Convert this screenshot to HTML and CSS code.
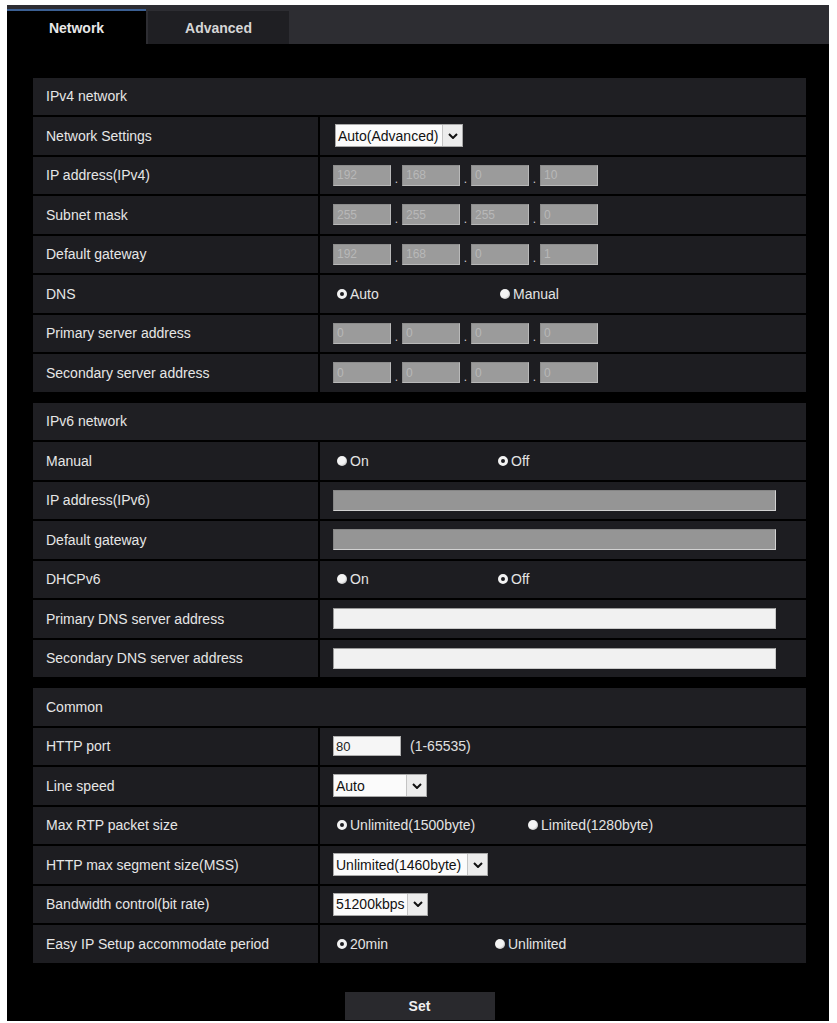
FILE: index.html
```html
<!DOCTYPE html>
<html lang="en">
<head>
<meta charset="utf-8">
<title>Network</title>
<link rel="stylesheet" href="styles.css">
</head>
<body>
<div class="panel">
  <div class="tabbar">
    <div class="tab tab-active">Network</div>
    <div class="tab tab-idle">Advanced</div>
  </div>

  <div class="content">
    <section class="section">
      <div class="sec-head">IPv4 network</div>
      <div class="row">
        <div class="label">Network Settings</div>
        <div class="value">
          <span class="select sel-netset"><span class="sel-text">Auto(Advanced)</span><span class="sel-arrow"><svg viewBox="0 0 10 6" width="10" height="6"><polyline points="1,1 5,5 9,1" fill="none" stroke="#111" stroke-width="2"/></svg></span></span>
        </div>
      </div>
      <div class="row">
        <div class="label">IP address(IPv4)</div>
        <div class="value ipset">
          <input class="ip" value="192" disabled><span class="dot">.</span><input class="ip" value="168" disabled><span class="dot">.</span><input class="ip" value="0" disabled><span class="dot">.</span><input class="ip" value="10" disabled>
        </div>
      </div>
      <div class="row">
        <div class="label">Subnet mask</div>
        <div class="value ipset">
          <input class="ip" value="255" disabled><span class="dot">.</span><input class="ip" value="255" disabled><span class="dot">.</span><input class="ip" value="255" disabled><span class="dot">.</span><input class="ip" value="0" disabled>
        </div>
      </div>
      <div class="row">
        <div class="label">Default gateway</div>
        <div class="value ipset">
          <input class="ip" value="192" disabled><span class="dot">.</span><input class="ip" value="168" disabled><span class="dot">.</span><input class="ip" value="0" disabled><span class="dot">.</span><input class="ip" value="1" disabled>
        </div>
      </div>
      <div class="row">
        <div class="label">DNS</div>
        <div class="value radios">
          <label class="opt opt-dns"><span class="radio radio-on"></span>Auto</label>
          <label class="opt"><span class="radio radio-off"></span>Manual</label>
        </div>
      </div>
      <div class="row">
        <div class="label">Primary server address</div>
        <div class="value ipset">
          <input class="ip" value="0" disabled><span class="dot">.</span><input class="ip" value="0" disabled><span class="dot">.</span><input class="ip" value="0" disabled><span class="dot">.</span><input class="ip" value="0" disabled>
        </div>
      </div>
      <div class="row">
        <div class="label">Secondary server address</div>
        <div class="value ipset">
          <input class="ip" value="0" disabled><span class="dot">.</span><input class="ip" value="0" disabled><span class="dot">.</span><input class="ip" value="0" disabled><span class="dot">.</span><input class="ip" value="0" disabled>
        </div>
      </div>
    </section>

    <section class="section">
      <div class="sec-head">IPv6 network</div>
      <div class="row">
        <div class="label">Manual</div>
        <div class="value radios">
          <label class="opt opt-onoff"><span class="radio radio-off"></span>On</label>
          <label class="opt"><span class="radio radio-on"></span>Off</label>
        </div>
      </div>
      <div class="row">
        <div class="label">IP address(IPv6)</div>
        <div class="value"><input class="wide wide-disabled" disabled></div>
      </div>
      <div class="row">
        <div class="label">Default gateway</div>
        <div class="value"><input class="wide wide-disabled" disabled></div>
      </div>
      <div class="row">
        <div class="label">DHCPv6</div>
        <div class="value radios">
          <label class="opt opt-onoff"><span class="radio radio-off"></span>On</label>
          <label class="opt"><span class="radio radio-on"></span>Off</label>
        </div>
      </div>
      <div class="row">
        <div class="label">Primary DNS server address</div>
        <div class="value"><input class="wide wide-enabled"></div>
      </div>
      <div class="row">
        <div class="label">Secondary DNS server address</div>
        <div class="value"><input class="wide wide-enabled"></div>
      </div>
    </section>

    <section class="section">
      <div class="sec-head">Common</div>
      <div class="row">
        <div class="label">HTTP port</div>
        <div class="value">
          <input class="port" value="80"><span class="hint">(1-65535)</span>
        </div>
      </div>
      <div class="row">
        <div class="label">Line speed</div>
        <div class="value">
          <span class="select sel-speed"><span class="sel-text">Auto</span><span class="sel-arrow"><svg viewBox="0 0 10 6" width="10" height="6"><polyline points="1,1 5,5 9,1" fill="none" stroke="#111" stroke-width="2"/></svg></span></span>
        </div>
      </div>
      <div class="row">
        <div class="label">Max RTP packet size</div>
        <div class="value radios">
          <label class="opt opt-rtp"><span class="radio radio-on"></span>Unlimited(1500byte)</label>
          <label class="opt"><span class="radio radio-off"></span>Limited(1280byte)</label>
        </div>
      </div>
      <div class="row">
        <div class="label">HTTP max segment size(MSS)</div>
        <div class="value">
          <span class="select sel-mss"><span class="sel-text">Unlimited(1460byte)</span><span class="sel-arrow"><svg viewBox="0 0 10 6" width="10" height="6"><polyline points="1,1 5,5 9,1" fill="none" stroke="#111" stroke-width="2"/></svg></span></span>
        </div>
      </div>
      <div class="row">
        <div class="label">Bandwidth control(bit rate)</div>
        <div class="value">
          <span class="select sel-bw"><span class="sel-text">51200kbps</span><span class="sel-arrow"><svg viewBox="0 0 10 6" width="10" height="6"><polyline points="1,1 5,5 9,1" fill="none" stroke="#111" stroke-width="2"/></svg></span></span>
        </div>
      </div>
      <div class="row">
        <div class="label">Easy IP Setup accommodate period</div>
        <div class="value radios">
          <label class="opt opt-easy"><span class="radio radio-on"></span>20min</label>
          <label class="opt"><span class="radio radio-off"></span>Unlimited</label>
        </div>
      </div>
    </section>
  </div>

  <div class="actions">
    <button class="set-btn" type="button">Set</button>
  </div>
</div>
</body>
</html>
```

FILE: styles.css
```css
* { box-sizing: border-box; }

html, body {
  margin: 0;
  padding: 0;
  background: #ffffff;
}

body {
  font-family: "Liberation Sans", Arial, sans-serif;
  font-size: 14px;
  color: #e6e6e6;
}

.panel {
  margin: 5px 0 0 7px;
  width: 822px;
  height: 1016px;
  background: #000000;
  display: flex;
  flex-direction: column;
}

/* Tabs */
.tabbar {
  height: 39px;
  flex: none;
  background: #2d2d32;
  display: flex;
  align-items: flex-end;
}

.tab {
  display: flex;
  align-items: center;
  justify-content: center;
  font-weight: bold;
  font-size: 14px;
  color: #e8e8e8;
}

.tab-active {
  width: 139px;
  height: 35px;
  background: #000000;
  border-top: 2px solid #3b5f93;
  padding-bottom: 0;
}

.tab-idle {
  width: 141px;
  height: 33px;
  margin-left: 2px;
  background: #1f1f23;
  color: #d6d6d6;
  padding-top: 0;
}

/* Content */
.content {
  padding: 33.5px 23px 0 26px;
  display: flex;
  flex-direction: column;
  gap: 11px;
}

.section {
  display: flex;
  flex-direction: column;
  gap: 2px;
}

.sec-head {
  height: 37.5px;
  background: #1f1f23;
  display: flex;
  align-items: center;
  padding-left: 13px;
}

.row {
  height: 37.5px;
  display: grid;
  grid-template-columns: 285px 1fr;
  column-gap: 2px;
}

.label {
  background: #1d1d21;
  display: flex;
  align-items: center;
  padding-left: 13px;
  white-space: nowrap;
}

.value {
  background: #1d1d21;
  display: flex;
  align-items: center;
  padding-left: 13px;
}

/* IP fields */
.ip {
  width: 58px;
  height: 21px;
  margin: 0;
  padding: 0 3px;
  background: #9b9b9b;
  border: 1px solid #b9b9b9;
  border-top-color: #8c8c8c;
  border-left-color: #8c8c8c;
  color: #b8b8b8;
  font-family: "Liberation Sans", Arial, sans-serif;
  font-size: 12px;
  outline: none;
}

.dot {
  width: 11px;
  text-align: center;
  color: #cfcfcf;
  font-size: 12px;
  line-height: 1;
  padding-top: 8px;
}

/* Wide inputs */
.wide {
  width: 443px;
  height: 21px;
  margin: 0;
  padding: 0 3px;
  font-family: "Liberation Sans", Arial, sans-serif;
  font-size: 13px;
  outline: none;
}

.wide-disabled {
  background: #959595;
  border: 1px solid #d2d2d2;
  border-top-color: #858585;
  border-left-color: #858585;
}

.wide-enabled {
  background: #f1f1f1;
  border: 1px solid #c8c8c8;
  border-top-color: #9a9a9a;
  border-left-color: #9a9a9a;
}

.port {
  width: 68px;
  height: 20px;
  margin: 0;
  padding: 0 2px;
  background: #f6f6f6;
  border: 1px solid #b0b0b0;
  color: #222;
  font-family: "Liberation Sans", Arial, sans-serif;
  font-size: 13px;
  outline: none;
}

.hint {
  margin-left: 9px;
  color: #e0e0e0;
}

/* Selects */
.select {
  display: inline-flex;
  height: 23px;
  background: #fbfbfb;
  border: 1px solid #a8a8a8;
  color: #111111;
  align-items: stretch;
}

.sel-text {
  flex: 1;
  display: flex;
  align-items: center;
  padding-left: 2px;
  white-space: nowrap;
  overflow: hidden;
}

.sel-arrow {
  width: 20px;
  flex: none;
  display: flex;
  align-items: center;
  justify-content: center;
  background: #ececec;
  border-left: 1px solid #c4c4c4;
}

.sel-netset { width: 128px; margin-left: 2px; }
.sel-speed { width: 94px; }
.sel-mss { width: 155px; }
.sel-bw { width: 95px; }

/* Radios */
.radios {
  padding-left: 17px;
}

.opt {
  display: inline-flex;
  align-items: center;
  gap: 3px;
  color: #e4e4e4;
  white-space: nowrap;
}

.opt-onoff { width: 161px; }
.opt-dns { width: 163px; }
.opt-rtp { width: 191px; }
.opt-easy { width: 158px; }

.radio {
  width: 10px;
  height: 10px;
  border-radius: 50%;
  flex: none;
}

.radio-on {
  border: 3px solid #f2f2f2;
  background: #1d1d21;
}

.radio-off {
  background: #f4f4f4;
  box-shadow: inset -1px -1px 1px rgba(0,0,0,0.15);
}

/* Actions */
.actions {
  margin-top: 29.5px;
  padding: 0 23px 0 26px;
  display: flex;
  justify-content: center;
}

.set-btn {
  width: 150px;
  height: 28px;
  border: none;
  margin: 0;
  background: #29292d;
  color: #f0f0f0;
  font-family: "Liberation Sans", Arial, sans-serif;
  font-size: 14px;
  font-weight: bold;
  cursor: pointer;
}
```
